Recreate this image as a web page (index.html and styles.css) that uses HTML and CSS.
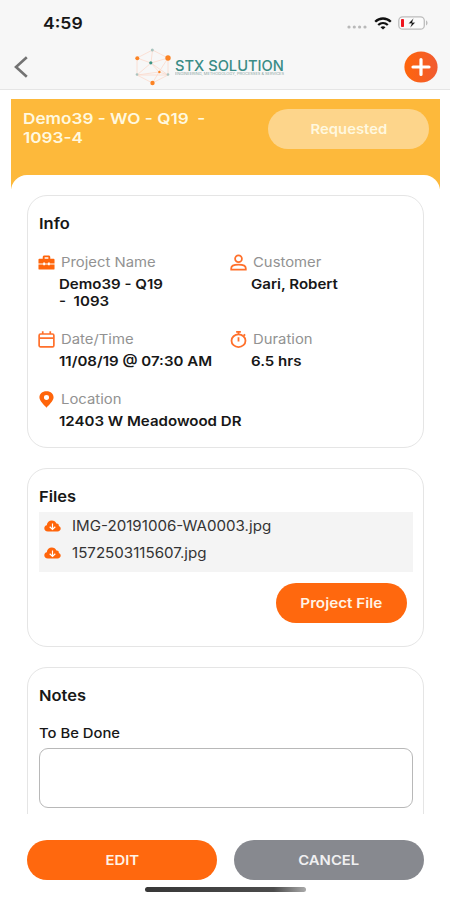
FILE: index.html
```html
<!DOCTYPE html>
<html lang="en">
<head>
<meta charset="utf-8">
<title>Work Order</title>
<link rel="stylesheet" href="styles.css">
</head>
<body>
<div class="app">
  <header class="header">
    <div class="status">
      <span class="clock tx">4:59</span>
      <div class="indicators">
        <svg width="20" height="4" viewBox="0 0 20 4" fill="#b9b9b9"><circle cx="2" cy="2" r="1.600"/><circle cx="7.300" cy="2" r="1.600"/><circle cx="12.600" cy="2" r="1.600"/><circle cx="18" cy="2" r="1.600"/></svg>
        <svg class="wifi" width="18" height="13" viewBox="0 0 18 13" fill="none" stroke="#111" stroke-width="2.300"><path d="M1.200 4.800C5.600.4 12.400.4 16.800 4.800"/><path d="M4.200 8c2.800-2.600 6.800-2.600 9.600 0"/><path d="M9 12.600 6.500 10.200c1.400-1.200 3.600-1.200 5 0z" fill="#111" stroke="none"/></svg>
        <svg class="battery" width="30" height="14" viewBox="0 0 30 14"><rect x=".8" y=".8" width="25.500" height="12.400" rx="3.800" fill="#fbfbfb" stroke="#bcbcbc" stroke-width="1.300"/><path d="M28 4.600c2 .5 2 4.300 0 4.800z" fill="#bcbcbc"/><rect x="3" y="3" width="3" height="8" rx=".8" fill="#ee1620"/><path d="M15.500 2.200 10.500 7.500h3.200L12.200 11.800 17.200 6.400h-3z" fill="#111" stroke="#fbfbfb" stroke-width=".3"/></svg>
      </div>
    </div>
    <nav class="nav">
      <svg class="back" width="14" height="22" viewBox="0 0 14 22" fill="none" stroke="#737373" stroke-width="2.600"><path d="M12.800 1.200 2 11l10.800 9.800"/></svg>
      <div class="logo">
        <svg width="36" height="38" viewBox="0 0 36 38">
          <g fill="none" stroke="#fbd9cb" stroke-width=".8"><path d="M2 10 17.500 2 33 10v17L17.500 35 2 27z"/><path d="M2 10 16 15 33 10M17.500 2 16 15 2 27l22-3 9-14M16 15l8 9 9 3M24 24l-6.500 11M16 15l17 12M2 27h31"/></g>
          <g fill="#fb8324"><circle cx="2.300" cy="10.300" r="2"/><circle cx="33" cy="10" r="2.700"/><circle cx="17.500" cy="35" r="2.200"/><circle cx="24.400" cy="24" r="1.200"/></g>
          <g fill="#a9c4bf"><circle cx="17.300" cy="2" r="1.500"/><circle cx="2" cy="26.500" r="1.300"/><circle cx="33" cy="26.500" r="1.300"/></g><circle cx="15.800" cy="14.800" r="1.600" fill="#3d9484"/>
        </svg>
        <div class="brand"><span class="brand-name">STX SOLUTION</span><span class="tagline">ENGINEERING, METHODOLOGY, PROCESSES &amp; SERVICES</span></div>
      </div>
      <svg class="add" width="34" height="32" viewBox="0 0 34 32"><defs><linearGradient id="g"><stop offset="0" stop-color="#ff650b"/><stop offset="1" stop-color="#f15b31"/></linearGradient></defs><ellipse cx="17" cy="16" rx="16.600" ry="15.500" fill="url(#g)"/><path d="M17 8.500v15M9 16h16" stroke="#fff" stroke-width="3.200" stroke-linecap="round"/></svg>
    </nav>
  </header>
  <main class="content">
    <div class="banner">
      <h1 class="title"><span class="tx">Demo39 - WO - Q19&nbsp; -<br>1093-4</span></h1>
      <div class="badge"><span class="tc">Requested</span></div>
    </div>
    <div class="sheet">
      <section class="card info">
        <h2><span class="tx">Info</span></h2>
        <div class="grid">
          <div class="field">
            <svg viewBox="0 0 18 16"><path fill="#ff650b" d="M5 4V2.500C5 1.200 5.700.5 7 .5h4c1.300 0 2 .7 2 2V4h3.500q1 0 1 1v4h-5V8h-2v1h-3V8h-2v1h-5V5q0-1 1-1zM7 4h4V2.500H7zM.5 10h5v1h2v-1h3v1h2v-1h5v4.500q0 1-1 1h-15q-1 0-1-1z"/></svg>
            <span class="label tx">Project Name</span>
            <span class="value tx">Demo39 - Q19<br>-&nbsp; 1093</span>
          </div>
          <div class="field">
            <svg viewBox="0 0 18 18" fill="none" stroke="#ff702b" stroke-width="1.900"><circle cx="9" cy="5" r="3.600"/><path d="M1.300 16.500V15c0-2.800 2.700-3.800 7.700-3.800s7.700 1 7.700 3.800v1.500z"/></svg>
            <span class="label tx">Customer</span>
            <span class="value tx">Gari, Robert</span>
          </div>
          <div class="field">
            <svg viewBox="0 0 18 18" fill="none" stroke="#ff702b" stroke-width="1.800"><rect x="1.200" y="3.200" width="15.600" height="13.600" rx="1.500"/><path d="M1.200 7.500h15.600M5 .2v3M13 .2v3"/></svg>
            <span class="label tx">Date/Time</span>
            <span class="value tx">11/08/19 @ 07:30 AM</span>
          </div>
          <div class="field">
            <svg viewBox="0 0 18 18" fill="none" stroke="#ff702b" stroke-width="1.900"><ellipse cx="9" cy="10.300" rx="7.400" ry="6.700"/><path d="M6.500 1h5M9 1v2.500M9 6.500V11M14.500 3.500l1.500 1.500"/></svg>
            <span class="label tx">Duration</span>
            <span class="value tx">6.5 hrs</span>
          </div>
          <div class="field">
            <svg viewBox="0 0 18 18"><path fill="#ff650b" fill-rule="evenodd" d="M9 .2c4.600 0 7.500 2.900 7.500 6.500C16.500 10.800 11.500 14.700 9 17.800 6.500 14.700 1.500 10.800 1.500 6.700 1.500 3.100 4.400.2 9 .2zM9 4.200a2.700 2.600 0 1 0 0 5.200 2.700 2.600 0 1 0 0-5.200z"/></svg>
            <span class="label tx">Location</span>
            <span class="value tx">12403 W Meadowood DR</span>
          </div>
        </div>
      </section>
      <section class="card files">
        <h2><span class="tx">Files</span></h2>
        <ul>
          <li><svg viewBox="0 0 17 12"><path fill="#ff650b" d="M4 11.500C1.500 11.500.3 10 .3 8.300c0-1.600 1-2.700 2.500-3C3 2.200 5.200.5 7.800.5c2.300 0 3.800 1.200 4.600 3 2-.1 2.700 1.300 2.400 2.500 1.200.4 1.900 1.400 1.900 2.600 0 1.700-1.300 2.900-3.200 2.900z"/><path d="M8.500 3.500V9M5.700 6.700l2.800 2.700 2.800-2.700" fill="none" stroke="#fff" stroke-width="1.200"/></svg><span class="tx">IMG-20191006-WA0003.jpg</span></li>
          <li><svg viewBox="0 0 17 12"><path fill="#ff650b" d="M4 11.500C1.500 11.500.3 10 .3 8.300c0-1.600 1-2.700 2.500-3C3 2.200 5.200.5 7.800.5c2.300 0 3.800 1.200 4.600 3 2-.1 2.700 1.300 2.400 2.500 1.200.4 1.900 1.400 1.900 2.600 0 1.700-1.300 2.900-3.200 2.900z"/><path d="M8.500 3.500V9M5.700 6.700l2.800 2.700 2.800-2.700" fill="none" stroke="#fff" stroke-width="1.200"/></svg><span class="tx">1572503115607.jpg</span></li>
        </ul>
        <button class="btn project"><span class="tc">Project File</span></button>
      </section>
      <section class="card notes">
        <h2><span class="tx">Notes</span></h2>
        <label for="todo"><span class="tx">To Be Done</span></label>
        <textarea id="todo"></textarea>
      </section>
    </div>
  </main>
  <footer class="footer">
    <div class="actions">
      <button class="btn edit"><span class="tc">EDIT</span></button>
      <button class="btn cancel"><span class="tc">CANCEL</span></button>
    </div>
    <div class="home"></div>
  </footer>
</div>
</body>
</html>
```
FILE: styles.css
```css
* { box-sizing: border-box; margin: 0; padding: 0; }
body { background: #fff; color: #171717; font-family: Inter, "Liberation Sans", sans-serif; overflow: hidden; }
svg { display: block; flex: none; }
.app { width: 450px; height: 900px; display: flex; flex-direction: column; }

/* Widened letterforms, anchored left or centred */
.tx, .tc { display: inline-block; white-space: nowrap; transform: scaleX(1.1); transform-origin: left center; }
.tc { transform-origin: center; }

.header { height: 90px; flex: none; background: #f7f7f7; border-bottom: 1.5px solid #e5e5e5; }
.status { height: 46px; padding: 0 23px 0 43px; display: flex; align-items: center; justify-content: space-between; }
.clock { font-size: 16px; font-weight: 600; line-height: 20px; }
.indicators { display: flex; align-items: center; }
.indicators svg:first-child { margin-top: 8px; }
.wifi { margin: 0 6px 0 7px; }
.battery { margin-right: -1px; }
.nav { height: 42px; padding: 0 12px 0 14px; display: flex; align-items: center; }
.logo { margin-left: 107px; display: flex; align-items: center; }
.brand { width: 110px; height: 17px; margin-left: 4px; display: flex; flex-direction: column; }
.brand-name { font-size: 14.5px; font-weight: 500; line-height: 13px; color: #3a8c86; white-space: nowrap; transform: scaleX(1.01); transform-origin: left; }
.tagline { font-size: 5px; line-height: 4px; color: #8aa3a1; white-space: nowrap; transform: scale(.79, .6); transform-origin: left top; }
.brand-name { height: 13px; flex: none; }
.tagline { height: 4px; margin-top: 1px; flex: none; }
.add { margin-left: auto; }

.content { height: 724px; flex: none; overflow: hidden; padding: 9px 10px 0 11px; }
.banner { height: 90px; background: #fdb93b; padding: 10px 11px 0 12px; display: flex; justify-content: space-between; color: #fff8df; }
.title { font-size: 15px; line-height: 19px; font-weight: 600; }
.title .tx { transform: scaleX(1.145); }
.badge { width: 161px; height: 40px; border-radius: 20px; background: #fdd58b; display: flex; align-items: center; justify-content: center; font-size: 13.5px; font-weight: 600; }
.sheet { margin-top: -14px; background: #fff; border-radius: 16px 16px 0 0; padding: 20px 16px 0; }
.card { border: 1.5px solid #e5e5e5; border-radius: 20px; padding: 18px 10px 0 11px; margin-bottom: 20px; }
h2 { font-size: 15px; line-height: 20px; font-weight: 600; }
.info { height: 253px; }
.grid { display: grid; grid-template-columns: 192px 1fr; grid-template-rows: 77px 60px 50px; margin-top: 18px; }
.field { display: grid; grid-template-columns: 22px 1fr; grid-template-rows: 20px 1fr; }
.field svg { width: 17px; height: 17px; margin-left: -1px; align-self: center; }
.label { font-size: 13.5px; line-height: 20px; color: #929292; }
.value { grid-column: 1 / -1; justify-self: start; margin: 4px 0 0 19.5px; font-size: 13.5px; line-height: 17px; font-weight: 600; }
.value.tx { transform: scaleX(1.115); }
.files { height: 179px; }
ul { list-style: none; height: 60px; margin-top: 5px; background: #f4f4f4; }
li { height: 27px; padding-left: 5px; display: flex; align-items: center; font-size: 14px; color: #333; }
li svg { width: 17px; height: 12px; margin-right: 11px; }
li .tx { transform: scaleX(1.08); }
.btn { border: 0; height: 40px; border-radius: 20px; font: 600 13.5px Inter, "Liberation Sans", sans-serif; color: #fff3e6; background: #ff680e; }
.project { display: block; width: 131px; margin: 11px 6px 0 auto; }
.project .tc { transform: scaleX(1.13); }
.notes { height: 180px; }
label { display: block; margin-top: 18px; font-size: 13px; line-height: 18px; font-weight: 500; }
label .tx { transform: scaleX(1.14); }
textarea { display: block; width: 100%; height: 60px; margin-top: 6px; border: 1.5px solid #b8b8b8; border-radius: 9px; background: #fff; resize: none; }

.footer { flex: 1; padding: 26px 27px 0; }
.actions { display: flex; gap: 17px; }
.actions .btn { width: 190px; flex: none; }
.cancel { background: #87898f; color: #f0f0f1; }
.home { width: 161px; height: 5px; margin: 7px auto 0; border-radius: 3px; background: linear-gradient(90deg, #373737 0, #4c4c4c 80%, #aaa 100%); }
```
